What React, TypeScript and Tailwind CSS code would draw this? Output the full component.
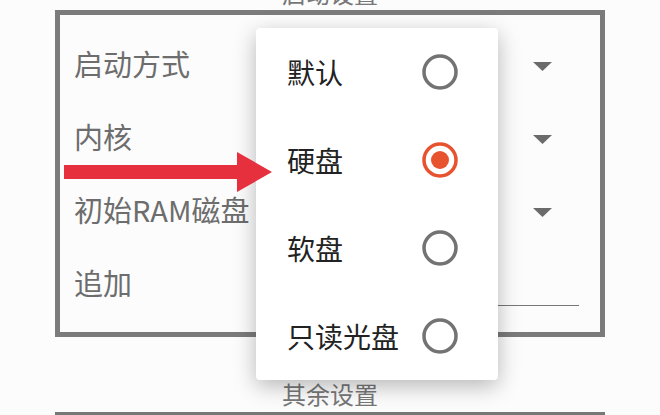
import React from "react";

const font = { fontFamily: '"Noto Sans CJK SC", "Noto Sans", sans-serif' };

function Tri() {
  return (
    <svg width="19" height="9" viewBox="0 0 19 9" className="block">
      <polygon points="0,0 19,0 9.5,9" fill="#6b6b6b" />
    </svg>
  );
}

function Radio({ on }: { on?: boolean }) {
  const c = on ? "#e8532f" : "#737373";
  return (
    <svg width="36" height="36" viewBox="0 0 36 36" className="block">
      <circle cx="18" cy="18" r="16" fill="none" stroke={c} strokeWidth="3.5" />
      {on && <circle cx="18" cy="18" r="9" fill={c} />}
    </svg>
  );
}

export default function App() {
  const rows = ["启动方式", "内核", "初始RAM磁盘"];
  const items = ["默认", "硬盘", "软盘", "只读光盘"];
  return (
    <div
      className="relative w-[660px] h-[415px] overflow-hidden bg-[#fcfcfd] flex flex-col"
      style={font}
    >
      <div className="mt-[-19px] h-[24px] text-[24px] leading-[24px] text-[#777] text-center">
        启动设置
      </div>
      <div className="mt-[5px] ml-[55px] w-[550px] h-[329px] border-[5px] border-[#7b7b7b] pt-[15px] pl-[14px] flex flex-col">
        {rows.map((r) => (
          <div key={r} className="h-[73px] flex items-center pr-[48px]">
            <span className="text-[29px] text-[#6d6d6d] leading-none pb-[6px]">{r}</span>
            <div className="ml-auto">
              <Tri />
            </div>
          </div>
        ))}
        <div className="h-[73px] flex items-center">
          <span className="w-[188px] text-[29px] text-[#6d6d6d] leading-none pb-[6px]">追加</span>
          <div className="flex-1 self-end mb-[16px] mr-[21px] border-b-[1.5px] border-[#777]" />
        </div>
      </div>
      <div className="mt-[45px] h-[24px] text-[24px] leading-[24px] text-[#777] text-center">
        其余设置
      </div>
      <div className="mt-[6px] ml-[55px] w-[550px] border-t-[3px] border-[#777]" />

      <div className="absolute left-[256px] top-[28px] w-[242px] h-[352px] bg-white rounded-[4px] shadow-[0_6px_22px_rgba(0,0,0,0.28)] flex flex-col">
        {items.map((it, i) => (
          <div key={it} className="h-[88px] flex items-center pl-[31px] pr-[40px]">
            <span className="text-[28px] text-[#222] leading-none">{it}</span>
            <div className="ml-auto">
              <Radio on={i === 1} />
            </div>
          </div>
        ))}
      </div>

      <svg
        className="absolute left-[64px] top-[152px]"
        width="208"
        height="40"
        viewBox="0 0 208 40"
      >
        <polygon points="0,13 173,13 173,0 208,20 173,40 173,27 0,27" fill="#e7303e" />
      </svg>
    </div>
  );
}
